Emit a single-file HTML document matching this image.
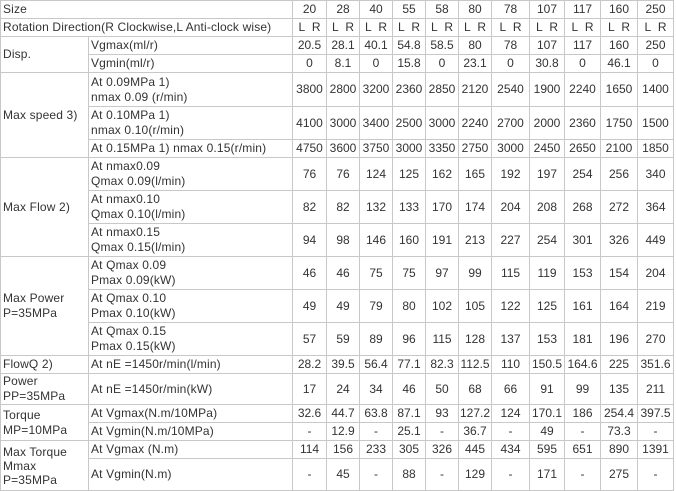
<!DOCTYPE html>
<html><head><meta charset="utf-8"><style>
body{margin:0;background:#fff;}
table{border-collapse:collapse;table-layout:fixed;width:674px;font-family:"Liberation Sans",Arial,sans-serif;font-size:12px;color:#333;letter-spacing:0.15px;}
td{border:1px solid #c8c8c8;padding:0 2px;line-height:15px;vertical-align:middle;overflow:hidden;white-space:nowrap;}
td.n{text-align:center;padding:0;letter-spacing:0;}
</style></head><body>
<table>
<colgroup><col style="width:88px"><col style="width:204px"><col style="width:34px"><col style="width:33px"><col style="width:33px"><col style="width:33px"><col style="width:33px"><col style="width:33px"><col style="width:38px"><col style="width:35px"><col style="width:36px"><col style="width:37px"><col style="width:36px"></colgroup>
<tr style="height:18px"><td colspan="2">Size</td><td class="n">20</td><td class="n">28</td><td class="n">40</td><td class="n">55</td><td class="n">58</td><td class="n">80</td><td class="n">78</td><td class="n">107</td><td class="n">117</td><td class="n">160</td><td class="n">250</td></tr>
<tr style="height:18px"><td colspan="2">Rotation Direction(R Clockwise,L Anti-clock wise)</td><td class="n">L&nbsp; R</td><td class="n">L&nbsp; R</td><td class="n">L&nbsp; R</td><td class="n">L&nbsp; R</td><td class="n">L&nbsp; R</td><td class="n">L&nbsp; R</td><td class="n">L&nbsp; R</td><td class="n">L&nbsp; R</td><td class="n">L&nbsp; R</td><td class="n">L&nbsp; R</td><td class="n">L&nbsp; R</td></tr>
<tr style="height:18px"><td rowspan="2">Disp.</td><td>Vgmax(ml/r)</td><td class="n">20.5</td><td class="n">28.1</td><td class="n">40.1</td><td class="n">54.8</td><td class="n">58.5</td><td class="n">80</td><td class="n">78</td><td class="n">107</td><td class="n">117</td><td class="n">160</td><td class="n">250</td></tr>
<tr style="height:18px"><td>Vgmin(ml/r)</td><td class="n">0</td><td class="n">8.1</td><td class="n">0</td><td class="n">15.8</td><td class="n">0</td><td class="n">23.1</td><td class="n">0</td><td class="n">30.8</td><td class="n">0</td><td class="n">46.1</td><td class="n">0</td></tr>
<tr style="height:34px"><td rowspan="3">Max speed 3)</td><td>At 0.09MPa 1)<br>nmax 0.09 (r/min)</td><td class="n">3800</td><td class="n">2800</td><td class="n">3200</td><td class="n">2360</td><td class="n">2850</td><td class="n">2120</td><td class="n">2540</td><td class="n">1900</td><td class="n">2240</td><td class="n">1650</td><td class="n">1400</td></tr>
<tr style="height:33px"><td>At 0.10MPa 1)<br>nmax 0.10(r/min)</td><td class="n">4100</td><td class="n">3000</td><td class="n">3400</td><td class="n">2500</td><td class="n">3000</td><td class="n">2240</td><td class="n">2700</td><td class="n">2000</td><td class="n">2360</td><td class="n">1750</td><td class="n">1500</td></tr>
<tr style="height:18px"><td>At 0.15MPa 1) nmax 0.15(r/min)</td><td class="n">4750</td><td class="n">3600</td><td class="n">3750</td><td class="n">3000</td><td class="n">3350</td><td class="n">2750</td><td class="n">3000</td><td class="n">2450</td><td class="n">2650</td><td class="n">2100</td><td class="n">1850</td></tr>
<tr style="height:33px"><td rowspan="3">Max Flow 2)</td><td>At nmax0.09<br>Qmax 0.09(l/min)</td><td class="n">76</td><td class="n">76</td><td class="n">124</td><td class="n">125</td><td class="n">162</td><td class="n">165</td><td class="n">192</td><td class="n">197</td><td class="n">254</td><td class="n">256</td><td class="n">340</td></tr>
<tr style="height:33px"><td>At nmax0.10<br>Qmax 0.10(l/min)</td><td class="n">82</td><td class="n">82</td><td class="n">132</td><td class="n">133</td><td class="n">170</td><td class="n">174</td><td class="n">204</td><td class="n">208</td><td class="n">268</td><td class="n">272</td><td class="n">364</td></tr>
<tr style="height:33px"><td>At nmax0.15<br>Qmax 0.15(l/min)</td><td class="n">94</td><td class="n">98</td><td class="n">146</td><td class="n">160</td><td class="n">191</td><td class="n">213</td><td class="n">227</td><td class="n">254</td><td class="n">301</td><td class="n">326</td><td class="n">449</td></tr>
<tr style="height:33px"><td rowspan="3">Max Power<br>P=35MPa</td><td>At Qmax 0.09<br>Pmax 0.09(kW)</td><td class="n">46</td><td class="n">46</td><td class="n">75</td><td class="n">75</td><td class="n">97</td><td class="n">99</td><td class="n">115</td><td class="n">119</td><td class="n">153</td><td class="n">154</td><td class="n">204</td></tr>
<tr style="height:33px"><td>At Qmax 0.10<br>Pmax 0.10(kW)</td><td class="n">49</td><td class="n">49</td><td class="n">79</td><td class="n">80</td><td class="n">102</td><td class="n">105</td><td class="n">122</td><td class="n">125</td><td class="n">161</td><td class="n">164</td><td class="n">219</td></tr>
<tr style="height:33px"><td>At Qmax 0.15<br>Pmax 0.15(kW)</td><td class="n">57</td><td class="n">59</td><td class="n">89</td><td class="n">96</td><td class="n">115</td><td class="n">128</td><td class="n">137</td><td class="n">153</td><td class="n">181</td><td class="n">196</td><td class="n">270</td></tr>
<tr style="height:18px"><td>FlowQ 2)</td><td>At nE =1450r/min(l/min)</td><td class="n">28.2</td><td class="n">39.5</td><td class="n">56.4</td><td class="n">77.1</td><td class="n">82.3</td><td class="n">112.5</td><td class="n">110</td><td class="n">150.5</td><td class="n">164.6</td><td class="n">225</td><td class="n">351.6</td></tr>
<tr style="height:31px"><td>Power<br>PP=35MPa</td><td>At nE =1450r/min(kW)</td><td class="n">17</td><td class="n">24</td><td class="n">34</td><td class="n">46</td><td class="n">50</td><td class="n">68</td><td class="n">66</td><td class="n">91</td><td class="n">99</td><td class="n">135</td><td class="n">211</td></tr>
<tr style="height:18px"><td rowspan="2">Torque<br>MP=10MPa</td><td>At Vgmax(N.m/10MPa)</td><td class="n">32.6</td><td class="n">44.7</td><td class="n">63.8</td><td class="n">87.1</td><td class="n">93</td><td class="n">127.2</td><td class="n">124</td><td class="n">170.1</td><td class="n">186</td><td class="n">254.4</td><td class="n">397.5</td></tr>
<tr style="height:18px"><td>At Vgmin(N.m/10MPa)</td><td class="n">-</td><td class="n">12.9</td><td class="n">-</td><td class="n">25.1</td><td class="n">-</td><td class="n">36.7</td><td class="n">-</td><td class="n">49</td><td class="n">-</td><td class="n">73.3</td><td class="n">-</td></tr>
<tr style="height:18px"><td rowspan="2" style="line-height:14px">Max Torque<br>Mmax<br>P=35MPa</td><td>At Vgmax (N.m)</td><td class="n">114</td><td class="n">156</td><td class="n">233</td><td class="n">305</td><td class="n">326</td><td class="n">445</td><td class="n">434</td><td class="n">595</td><td class="n">651</td><td class="n">890</td><td class="n">1391</td></tr>
<tr style="height:32px"><td>At Vgmin(N.m)</td><td class="n">-</td><td class="n">45</td><td class="n">-</td><td class="n">88</td><td class="n">-</td><td class="n">129</td><td class="n">-</td><td class="n">171</td><td class="n">-</td><td class="n">275</td><td class="n">-</td></tr>
</table>
</body></html>
